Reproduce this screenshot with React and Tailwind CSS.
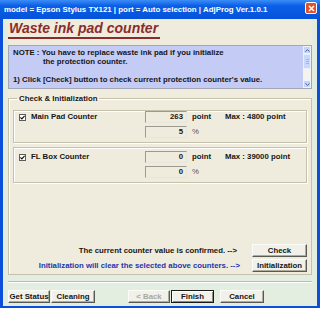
import React from "react";

// small classic-style push button
const Btn = ({ children, className = "", disabled = false, def = false }) => (
  <div
    className={`h-[13px] flex items-center justify-center bg-[#f1f0e9] text-[7.8px] leading-none font-bold ${
      def
        ? "border border-[#1a1a1a] shadow-[inset_1px_1px_0_#ffffff,inset_-1px_-1px_0_#8d8b80]"
        : "border border-t-[#fbfbf8] border-l-[#fbfbf8] border-r-[#5a5a55] border-b-[#5a5a55] shadow-[inset_-1px_-1px_0_#aeac9f]"
    } ${disabled ? "text-[#a9a89e]" : "text-[#141414]"} ${className}`}
  >
    {children}
  </div>
);

const Check = () => (
  <div className="w-[7px] h-[7px] bg-white border border-[#5d5d5d] flex items-center justify-center shrink-0">
    <svg width="5" height="5" viewBox="0 0 5 5">
      <path d="M0.4 2.4 L1.9 3.9 L4.6 0.9" stroke="#111" strokeWidth="1.2" fill="none" />
    </svg>
  </div>
);

const Field = ({ value }) => (
  <div className="w-[42px] h-[12px] border border-t-[#9d9b8f] border-l-[#9d9b8f] border-r-[#e8e6dc] border-b-[#e8e6dc] flex items-center justify-end pr-[3px] leading-none">
    {value}
  </div>
);

const Counter = ({ label, point, percent, max, className = "" }) => (
  <div
    className={`border border-[#c5c1ad] shadow-[inset_1px_1px_0_#ffffff,1px_1px_0_#ffffff] flex flex-col gap-[3px] ${className}`}
  >
    <div className="h-[12px] flex items-center">
      <div className="w-[131px] flex items-center gap-[5px] pl-[5px]">
        <Check />
        <span>{label}</span>
      </div>
      <Field value={point} />
      <span className="w-[38px] pl-[5px]">point</span>
      <span>{max}</span>
    </div>
    <div className="h-[12px] flex items-center">
      <div className="w-[131px]" />
      <Field value={percent} />
      <span className="pl-[5px] font-normal text-[#555]">%</span>
    </div>
  </div>
);

const Scrollbar = () => (
  <div className="w-[8px] flex flex-col bg-[#f4f3ee]">
    <div className="h-[8px] bg-[#c4d4fb] border border-[#eef2fd] flex items-center justify-center">
      <svg width="5" height="3" viewBox="0 0 5 3">
        <path d="M0.5 2.5 L2.5 0.7 L4.5 2.5" stroke="#4d6185" strokeWidth="1" fill="none" />
      </svg>
    </div>
    <div className="h-[15px] bg-[#c9d7fb] border border-[#e8eefd] flex flex-col items-center justify-center gap-[1px]">
      <div className="w-[3px] h-px bg-[#9fb3e6]" />
      <div className="w-[3px] h-px bg-[#9fb3e6]" />
      <div className="w-[3px] h-px bg-[#9fb3e6]" />
    </div>
    <div className="flex-1" />
    <div className="h-[8px] bg-[#c4d4fb] border border-[#eef2fd] flex items-center justify-center">
      <svg width="5" height="3" viewBox="0 0 5 3">
        <path d="M0.5 0.5 L2.5 2.3 L4.5 0.5" stroke="#4d6185" strokeWidth="1" fill="none" />
      </svg>
    </div>
  </div>
);

export default function App() {
  return (
    <div className="w-[320px] h-[318px] bg-white font-['Liberation_Sans',Arial,sans-serif] text-[7.8px] font-bold text-[#151515] overflow-hidden">
      <div className="w-[320px] h-[308px] bg-[#0b4fda] flex flex-col pb-[2px]">
        {/* title bar */}
        <div className="h-[19px] shrink-0 bg-linear-to-b from-[#3b8df6] via-[#0b5fe7] via-30% to-[#0553da] flex items-center justify-between pl-[4px] pr-[3px]">
          <span className="text-white text-[7.9px]">
            model = Epson Stylus TX121 | port = Auto selection | AdjProg Ver.1.0.1
          </span>
          <div className="w-[12px] h-[12px] mb-[3px] rounded-[2px] border border-white bg-[#e2522a] flex items-center justify-center">
            <svg width="7" height="7" viewBox="0 0 7 7">
              <path d="M1 1 L6 6 M6 1 L1 6" stroke="#fff" strokeWidth="1.5" />
            </svg>
          </div>
        </div>

        {/* client area */}
        <div className="flex-1 mx-[3px] bg-[#e3eee1] flex flex-col">
          <div className="h-[256px] mx-[5px] bg-[#f0ecdd] flex flex-col">
            <div className="self-start mt-[2px] pl-[1px] pr-[2px] pb-[2px] border-b-2 border-[#8c2b2b] text-[14px] leading-[14px] italic text-[#8c2b2b]">
              Waste ink pad counter
            </div>

            <div className="mt-[6px] h-[44px] shrink-0 border border-[#a3a6b4] bg-[#c4ccf6] flex">
              <div className="flex-1 pl-[4px] pt-[1.5px] leading-[9px]">
                <div>NOTE : You have to replace waste ink pad if you initialize</div>
                <div className="pl-[30px]">the protection counter.</div>
                <div>&nbsp;</div>
                <div>1) Click [Check] button to check current protection counter's value.</div>
              </div>
              <Scrollbar />
            </div>

            <fieldset className="mt-[5px] flex-1 min-h-0 border border-[#c5c1ad] shadow-[inset_1px_1px_0_#ffffff] px-[4px] pt-[7px] pb-[2px]">
              <legend className="ml-[4px] px-[2px] leading-[9px]">Check &amp; Initialization</legend>
              <Counter label="Main Pad Counter" point="263" percent="5" max="Max : 4800 point" className="h-[33px]" />
              <Counter label="FL Box Counter" point="0" percent="0" max="Max : 39000 point" className="h-[36px] mt-[4px] pt-[3px]" />
              <div className="flex items-center justify-end gap-[15px] h-[13px] mt-[61px]">
                <span>The current counter value is confirmed. --&gt;</span>
                <Btn className="w-[55px]">Check</Btn>
              </div>
              <div className="flex items-center justify-end gap-[12px] h-[13px] mt-[2px]">
                <span className="text-[#2234ad]">Initialization will clear the selected above counters. --&gt;</span>
                <Btn className="w-[55px]">Initialization</Btn>
              </div>
            </fieldset>
          </div>

          <div className="mt-[6px] mx-[5px] h-[2px] border-t border-[#bdbcb0] border-b border-b-white" />

          <div className="mt-[7px] ml-[5px] h-[13px] flex">
            <Btn className="w-[42px]">Get Status</Btn>
            <Btn className="w-[44px] ml-[1px]">Cleaning</Btn>
            <Btn disabled className="w-[42px] ml-[33px]">&lt; Back</Btn>
            <Btn def className="w-[43px] ml-[1px]">Finish</Btn>
            <Btn className="w-[44px] ml-[6px]">Cancel</Btn>
          </div>
        </div>
      </div>
    </div>
  );
}
